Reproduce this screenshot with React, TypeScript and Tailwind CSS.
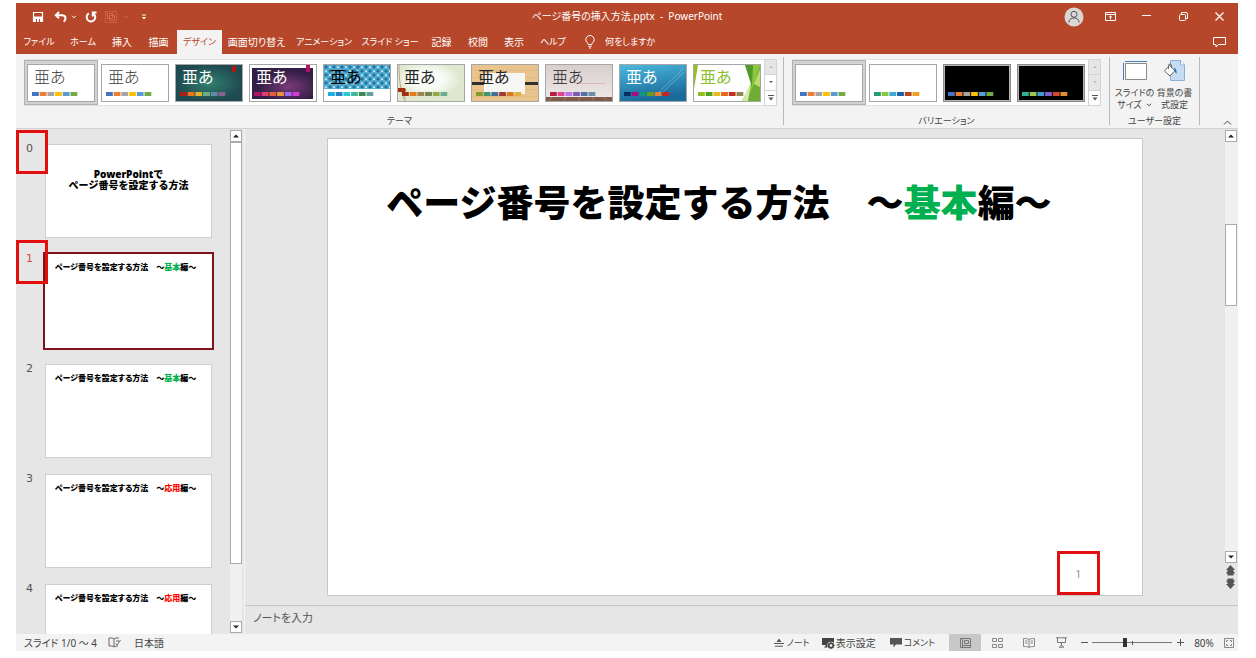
import type { ReactNode } from "react";

const OFFICE = ["#4472c4", "#ed7d31", "#a5a5a5", "#ffc000", "#5b9bd5", "#70ad47"];

type Theme = {
  name: string;
  colors: string[];
  text: string;
  art: ReactNode;
};

const THEMES: Theme[] = [
  { name: "この プレゼンテーション", colors: OFFICE, text: "font-light text-[#404040]", art: null },
  { name: "Office テーマ", colors: OFFICE, text: "font-light text-[#404040]", art: null },
  {
    name: "イオン ボードルーム",
    colors: ["#b31a1a", "#e8731a", "#e0b030", "#6fae7e", "#5f8aa8", "#8d6095"],
    text: "text-white",
    art: (
      <>
        <defs>
          <radialGradient id="teal">
            <stop offset="0" stopColor="#33806f" />
            <stop offset="1" stopColor="#1f4a50" />
          </radialGradient>
        </defs>
        <rect width="66" height="36" fill="url(#teal)" />
        <rect x="56" y="1" width="4" height="6" fill="#b01513" />
      </>
    ),
  },
  {
    name: "イオン",
    colors: ["#b31166", "#e33d6f", "#e45f3c", "#e9943a", "#9b6bf2", "#d53dd0"],
    text: "text-white",
    art: (
      <>
        <defs>
          <radialGradient id="purple" cx=".6" cy=".6">
            <stop offset="0" stopColor="#7a3a78" />
            <stop offset="1" stopColor="#331f45" />
          </radialGradient>
        </defs>
        <rect x="2" y="3" width="61" height="31" fill="url(#purple)" />
        <rect x="56" y="0" width="4" height="7" fill="#b31166" />
      </>
    ),
  },
  {
    name: "インテグラル",
    colors: ["#1cade4", "#2683c6", "#27ced7", "#42ba97", "#3e8853", "#62a39f"],
    text: "text-black",
    art: (
      <>
        <defs>
          <pattern id="plaid" width="8" height="8" patternUnits="userSpaceOnUse">
            <rect width="8" height="8" fill="#55aacf" />
            <path d="M2 0l2 2-2 2-2-2zM6 4l2 2-2 2-2-2z" fill="#1777a5" />
            <path d="M6 1l1.2 1.2L6 3.4 4.8 2.2zM2 5l1.2 1.2L2 7.4.8 6.2z" fill="#d3edf6" />
          </pattern>
        </defs>
        <rect width="66" height="24" fill="url(#plaid)" />
      </>
    ),
  },
  {
    name: "ウィスプ",
    colors: ["#a53010", "#de7e18", "#9f8351", "#728653", "#92aa4c", "#6aac91"],
    text: "text-[#262626]",
    art: (
      <>
        <defs>
          <radialGradient id="cream" cx=".45" cy=".4">
            <stop offset="0" stopColor="#ffffff" />
            <stop offset=".5" stopColor="#f8faf4" />
            <stop offset="1" stopColor="#dfe8cf" />
          </radialGradient>
        </defs>
        <rect width="66" height="36" fill="url(#cream)" />
        <path d="M1 0c0 12 1 26 6 36M4 26c2 2 3 5 3 9" fill="none" stroke="#b4a98a" />
        <path d="M0 23h7l1 2-1 2H0z" fill="#a53010" />
      </>
    ),
  },
  {
    name: "オーガニック",
    colors: ["#83992a", "#3c9770", "#44709d", "#a23c33", "#d97828", "#deb340"],
    text: "text-[#262626]",
    art: (
      <>
        <rect width="66" height="36" fill="#e9c48e" />
        <path d="M0 5.500h66M0 12.500h66M0 24.500h66M0 31.500h66" stroke="#e2b97f" />
        <path d="M0 18.500h66" stroke="#303030" strokeWidth="3" />
        <rect x="12" y="8" width="41" height="21" fill="#f6f6f4" />
      </>
    ),
  },
  {
    name: "ギャラリー",
    colors: ["#b71e42", "#de478e", "#bc72f0", "#795faf", "#586ea6", "#6892a0"],
    text: "font-light text-[#262626]",
    art: (
      <>
        <defs>
          <linearGradient id="wall" x2="0" y2="1">
            <stop offset="0" stopColor="#d6cfce" />
            <stop offset="1" stopColor="#efe9e8" />
          </linearGradient>
        </defs>
        <rect width="66" height="36" fill="url(#wall)" />
        <path d="M34 18.500h25" stroke="#dfb4bb" />
        <rect y="32" width="66" height="4" fill="#7d5a49" />
        <path d="M6 32l-3 4M20 32l-2 4M33 32v4M46 32l2 4M58 32l3 4" stroke="#a07c66" />
      </>
    ),
  },
  {
    name: "スライス",
    colors: ["#052f61", "#a50e82", "#14967c", "#6a9e1f", "#e87d37", "#c62324"],
    text: "text-white",
    art: (
      <>
        <defs>
          <linearGradient id="sky" x2=".3" y2="1">
            <stop offset="0" stopColor="#4cb9dd" />
            <stop offset="1" stopColor="#1a6a9b" />
          </linearGradient>
        </defs>
        <rect width="66" height="36" fill="url(#sky)" />
        <path d="M64 3L38 28M64 7L42 28" stroke="#7cc4df" strokeWidth=".6" />
      </>
    ),
  },
  {
    name: "ファセット",
    colors: ["#90c226", "#54a021", "#e6b91e", "#e76618", "#c42f1a", "#918655"],
    text: "text-[#8cc02c]",
    art: (
      <>
        <path d="M0 0h4L0 24z" fill="#90c226" />
        <path d="M51 0h15v36H48l9-18z" fill="#8fc63f" />
        <path d="M51 0h8l-1 22z" fill="#4f9a2b" />
        <path d="M66 0v36H52l8-17z" fill="#6fae35" />
        <path d="M66 4v18l-6-3z" fill="#b6dc6c" />
        <path d="M57 18l-9 18h6z" fill="#d4ebaa" />
      </>
    ),
  },
];

const VARIANTS = [
  { name: "バリエーション 1", dark: false, colors: OFFICE },
  { name: "バリエーション 2", dark: false, colors: ["#239b6e", "#8cc63e", "#3fa9d0", "#1c5fa5", "#b8451f", "#f0a020"] },
  { name: "バリエーション 3", dark: true, colors: OFFICE },
  { name: "バリエーション 4", dark: true, colors: ["#2fae9a", "#9fc54d", "#3f9bd0", "#7d5fd0", "#d04a28", "#e09030"] },
];

const TABS = [
  { label: "ファイル", size: "w-[46px] text-[9px]" },
  { label: "ホーム", size: "w-[42px] text-[9px]" },
  { label: "挿入", size: "w-9 text-[10px]" },
  { label: "描画", size: "w-[37px] text-[10px]" },
  { label: "デザイン", size: "w-[45px] text-[9px]" },
  { label: "画面切り替え", size: "w-[69px] text-[10px]" },
  { label: "アニメーション", size: "w-[66px] text-[9px]" },
  { label: "スライド ショー", size: "w-[66px] text-[9px]" },
  { label: "記録", size: "w-[37px] text-[10px]" },
  { label: "校閲", size: "w-9 text-[10px]" },
  { label: "表示", size: "w-9 text-[10px]" },
  { label: "ヘルプ", size: "w-[42px] text-[9px]" },
];

const SLIDES = [
  { no: 0, word: "", color: "" },
  { no: 1, word: "基本", color: "text-[#00b050]" },
  { no: 2, word: "基本", color: "text-[#00b050]" },
  { no: 3, word: "応用", color: "text-[#ff0000]" },
  { no: 4, word: "応用", color: "text-[#ff0000]" },
];

function Swatches({ colors }: { colors: string[] }) {
  return (
    <svg viewBox="0 0 46 4" className="absolute bottom-[5px] left-1 h-1 w-[46px]">
      {colors.map((c, i) => (
        <rect key={c} x={i * 7.7} width="6.8" height="4" fill={c} />
      ))}
    </svg>
  );
}

function GalleryItem({
  label,
  selected,
  dark,
  children,
}: {
  label: string;
  selected: boolean;
  dark?: boolean;
  children: ReactNode;
}) {
  return (
    <button
      type="button"
      aria-label={label}
      aria-pressed={selected}
      className={`h-[45px] w-[74px] shrink-0 ${selected ? "border border-[#b0b0b0] bg-[#d2d2d2] p-[2px]" : "p-[3px]"}`}
    >
      <span
        className={`relative block h-[38px] w-[68px] overflow-hidden border ${
          dark ? "border-[#8c8c8c] bg-black ring-1 ring-[#b5b5b5] ring-inset" : "border-[#a6a6a6] bg-white"
        }`}
      >
        {children}
      </span>
    </button>
  );
}

function GalleryScroll({ canDown }: { canDown: boolean }) {
  return (
    <div className="-my-px flex w-[13px] flex-col border border-[#d4d4d4]">
      <button type="button" aria-label="前の行" className="flex flex-1 items-center justify-center bg-[#e6e6e6]">
        <svg viewBox="0 0 6 4" className="h-1 w-1.5">
          <path d="M1 3l2-2 2 2z" fill="#b8b8b8" />
        </svg>
      </button>
      <button
        type="button"
        aria-label="次の行"
        className={`flex flex-1 items-center justify-center border-y border-[#d4d4d4] ${canDown ? "bg-white" : "bg-[#e6e6e6]"}`}
      >
        <svg viewBox="0 0 6 4" className="h-1 w-1.5">
          <path d="M1 1l2 2 2-2z" fill={canDown ? "#555" : "#b8b8b8"} />
        </svg>
      </button>
      <button type="button" aria-label="その他" className="flex flex-1 items-center justify-center bg-white">
        <svg viewBox="0 0 8 6" className="h-1.5 w-2">
          <path d="M1 .5h6" stroke="#555" />
          <path d="M1.500 2.500l2.500 3 2.500-3z" fill="#555" />
        </svg>
      </button>
    </div>
  );
}

function RibbonGroup({ caption, children }: { caption: string; children: ReactNode }) {
  return (
    <section aria-label={caption} className="flex flex-col pt-[5px]">
      {children}
      <p className="mt-2 text-center text-[9px] leading-[14px] text-[#444]">{caption}</p>
    </section>
  );
}

function Divider() {
  return <div className="my-[3px] w-px bg-[#b9b9b9]" />;
}

function ArrowButton({ label, up }: { label: string; up?: boolean }) {
  return (
    <button
      type="button"
      aria-label={label}
      className="flex size-3 shrink-0 items-center justify-center border border-[#ababab] bg-white"
    >
      <svg viewBox="0 0 6 4" className="h-1 w-1.5">
        <path d={up ? "M0 3.5L3 .5l3 3z" : "M0 .5l3 3 3-3z"} fill="#222" />
      </svg>
    </button>
  );
}

function Callout({ className }: { className: string }) {
  return <span aria-hidden="true" className={`pointer-events-none absolute z-10 h-11 border-[3px] border-[#e10f0f] ${className}`} />;
}

function DeckTitle({ word, color }: { word: string; color: string }) {
  return (
    <>
      ページ番号を設定する方法　～<span className={color}>{word}</span>編～
    </>
  );
}

function TitleBar() {
  return (
    <header className="grid h-[27px] grid-cols-[1fr_auto_1fr] items-center text-white">
      <div className="flex items-center pl-4">
        <button type="button" aria-label="上書き保存">
          <svg viewBox="0 0 12 12" className="size-3" fill="none" stroke="currentColor">
            <path d="M1.500 1.500h9v9h-9z" strokeWidth="1.2" />
            <path d="M1.500 6h9v4.500h-9z" fill="currentColor" />
            <path d="M4.500 8v3M7.500 8v3" stroke="#b7472a" />
          </svg>
        </button>
        <button type="button" aria-label="元に戻す" className="ml-2.5">
          <svg viewBox="0 0 13 12" className="h-3 w-[13px]" fill="none" stroke="currentColor" strokeWidth="2">
            <path d="M5 1L1.800 4.200 5 7.400M2 4.200h6c2.300 0 3.500 1.300 3.500 3 0 1.400-.6 2.400-1.800 3.500" />
          </svg>
        </button>
        <Caret className="ml-1" />
        <button type="button" aria-label="繰り返し" className="ml-2">
          <svg viewBox="0 0 12 12" className="size-3" fill="none" stroke="currentColor" strokeWidth="2">
            <path d="M3.800 2.400a4.300 4.300 0 104.800.300M11.500 1.500H7.800v4" />
          </svg>
        </button>
        <button type="button" aria-label="グループ化" className="ml-2 text-[#da6a4c]">
          <svg viewBox="0 0 12 12" className="size-3" fill="none" stroke="currentColor">
            <path d="M.5.5h11v11H.5z" strokeDasharray="2 1" />
            <path d="M2.500 2.500h5v5h-5zM4.500 4.500h5v5h-5z" />
          </svg>
        </button>
        <Caret className="ml-1.5 text-[#da6a4c]" />
        <button type="button" aria-label="クイック アクセス ツール バーのカスタマイズ" className="ml-3">
          <svg viewBox="0 0 6 6" className="size-1.5">
            <path d="M1 1h4" stroke="currentColor" />
            <path d="M1 3h4L3 5.500z" fill="currentColor" />
          </svg>
        </button>
      </div>
      <h2 className="text-[10px] whitespace-pre">ページ番号の挿入方法.pptx  -  PowerPoint</h2>
      <div className="flex items-center justify-end">
        <button type="button" aria-label="アカウント" className="flex w-9 justify-center">
          <svg viewBox="0 0 20 20" className="size-5">
            <circle cx="10" cy="10" r="9.5" fill="#d9d6d5" />
            <g fill="none" stroke="#555">
              <circle cx="10" cy="7.3" r="3" />
              <path d="M4.800 15.500c.4-3 2.400-4.600 5.200-4.600s4.800 1.600 5.200 4.600" />
            </g>
          </svg>
        </button>
        <button type="button" aria-label="リボンの表示オプション" className="flex w-9 justify-center">
          <svg viewBox="0 0 11 9" className="h-[9px] w-[11px]" fill="none" stroke="currentColor">
            <path d="M.5.5h10v8H.5zM.5 2.500h10M5.500 7.500V4M4 5.300L5.500 4 7 5.300" />
          </svg>
        </button>
        <button type="button" aria-label="最小化" className="flex w-[37px] justify-center">
          <svg viewBox="0 0 9 9" className="size-[9px]" stroke="currentColor">
            <path d="M0 3.500h9" />
          </svg>
        </button>
        <button type="button" aria-label="元に戻す (縮小)" className="flex w-9 justify-center">
          <svg viewBox="0 0 9 9" className="size-[9px]" fill="none" stroke="currentColor">
            <rect x=".5" y="2.500" width="6" height="6" rx="1" />
            <path d="M2.500 2V.5H7A1.500 1.500 0 018.500 2v4.500H7" />
          </svg>
        </button>
        <button type="button" aria-label="閉じる" className="flex w-[37px] justify-center">
          <svg viewBox="0 0 9 9" className="size-[9px]" stroke="currentColor" strokeWidth="1.200">
            <path d="M.5.5l8 8M8.500.5l-8 8" />
          </svg>
        </button>
      </div>
    </header>
  );
}

function Caret({ className = "" }: { className?: string }) {
  return (
    <svg viewBox="0 0 6 4" className={`h-1 w-1.5 ${className}`} fill="none" stroke="currentColor">
      <path d="M1 .8l2 2 2-2" />
    </svg>
  );
}

function TabBar() {
  return (
    <nav aria-label="リボン" className="flex h-6 text-white">
      {TABS.map((tab) => (
        <button
          key={tab.label}
          type="button"
          aria-current={tab.label === "デザイン" ? "page" : undefined}
          className={`flex shrink-0 items-center justify-center whitespace-nowrap ${tab.size} ${
            tab.label === "デザイン" ? "bg-[#f3f3f3] text-[#b7472a]" : ""
          }`}
        >
          {tab.label}
        </button>
      ))}
      <button type="button" className="ml-[11px] flex items-center gap-2.5 text-[9px] whitespace-nowrap">
        <svg viewBox="0 0 10 14" className="h-3.5 w-2.5" fill="none" stroke="currentColor">
          <path d="M3.200 9.500C3 7.800.8 7 .8 4.700a4.200 4.200 0 018.400 0C9.200 7 7 7.800 6.800 9.500zM3.300 11.300h3.400M4 13h2" />
        </svg>
        何をしますか
      </button>
      <button type="button" aria-label="コメント" className="mr-3 ml-auto">
        <svg viewBox="0 0 13 12" className="h-3 w-[13px]" fill="none" stroke="currentColor">
          <path d="M.5 1.500h12v7H5.500L3 11V8.500H.5z" />
        </svg>
      </button>
    </nav>
  );
}

function Ribbon() {
  return (
    <div className="flex h-[75px] shrink-0 border-b border-[#d2d2d2] bg-[#f3f3f3]">
      <RibbonGroup caption="テーマ">
        <div className="mr-1.5 ml-2 flex border-y border-[#e1e1e1] bg-white">
          {THEMES.map((theme, i) => (
            <GalleryItem key={theme.name} label={theme.name} selected={i === 0}>
              <svg viewBox="0 0 66 36" className="absolute inset-0 h-full w-full">
                {theme.art}
              </svg>
              <span className={`absolute top-1 left-1.5 text-[16px] leading-4 ${theme.text}`}>亜あ</span>
              <Swatches colors={theme.colors} />
            </GalleryItem>
          ))}
          <GalleryScroll canDown />
        </div>
      </RibbonGroup>
      <Divider />
      <RibbonGroup caption="バリエーション">
        <div className="mr-2 ml-2 flex border-y border-[#e1e1e1] bg-white">
          {VARIANTS.map((v, i) => (
            <GalleryItem key={v.name} label={v.name} selected={i === 0} dark={v.dark}>
              <Swatches colors={v.colors} />
            </GalleryItem>
          ))}
          <GalleryScroll canDown={false} />
        </div>
      </RibbonGroup>
      <Divider />
      <RibbonGroup caption="ユーザー設定">
        <div className="flex h-[47px] w-[89px] justify-center text-[9px] leading-3 whitespace-nowrap text-[#444]">
          <button type="button" className="flex w-10 flex-col items-center">
            <svg viewBox="0 0 25 24" className="h-6 w-[25px] shrink-0" fill="none">
              <path d="M3 2.500h22M1.500 4v17" stroke="#4a7ebb" />
              <path d="M3.500 4.500h21v16h-21z" fill="#fff" stroke="#8a8a8a" />
            </svg>
            <span className="mt-1">スライドの</span>
            <span className="flex items-center gap-1">
              サイズ
              <Caret />
            </span>
          </button>
          <button type="button" className="flex w-10 flex-col items-center">
            <svg viewBox="0 0 24 24" className="size-6 shrink-0" fill="none">
              <path d="M7.500 1.500h10l4 4.500v15.500h-14z" fill="#c5dcf2" stroke="#8ab0d8" />
              <path d="M17.500 1.500V6h4" fill="#fff" stroke="#8ab0d8" />
              <path d="M6.500 6.500l5.500 5-5 5.500-5.500-5z" fill="#fff" stroke="#666" />
              <path d="M5.500 10V6.500a1.500 1.500 0 013 0V9" stroke="#666" />
              <path d="M11 9c2 .5 2.800 2 2.500 6l-2-3z" fill="#2f6fb5" />
            </svg>
            <span className="mt-1">背景の書</span>
            <span>式設定</span>
          </button>
        </div>
      </RibbonGroup>
      <Divider />
      <button type="button" aria-label="リボンを折りたたむ" className="mt-auto mr-1.5 mb-[3px] ml-auto">
        <svg viewBox="0 0 9 5" className="h-[5px] w-[9px]" fill="none" stroke="#444">
          <path d="M1 4.500L4.500 1 8 4.500" />
        </svg>
      </button>
    </div>
  );
}

function SlideList() {
  return (
    <aside aria-label="スライド一覧" className="w-[214px] shrink-0 overflow-hidden">
      <ol className="flex flex-col gap-4 pt-[15px]">
        {SLIDES.map((slide) => (
          <li key={slide.no} className="relative flex">
            <span
              className={`w-[29px] pl-2.5 font-['DejaVu_Sans',sans-serif] text-[11px] leading-[9px] ${
                slide.no === 1 ? "text-[#d04a2e]" : "text-[#555]"
              }`}
            >
              {slide.no}
            </span>
            <button
              type="button"
              aria-label={`スライド ${slide.no}`}
              className={`flex h-[94px] w-[167px] flex-col items-center bg-white font-black whitespace-nowrap text-black ${
                slide.no === 1 ? "outline-2 outline-[#7f1518]" : "border border-[#cfcfcf]"
              }`}
            >
              {slide.no === 0 ? (
                <span className="mt-6 text-[10px] leading-[11px] [font-feature-settings:normal]">
                  PowerPointで
                  <br />
                  ページ番号を設定する方法
                </span>
              ) : (
                <span className="mt-2 pr-1.5 text-[8px] leading-[10px]">
                  <DeckTitle word={slide.word} color={slide.color} />
                </span>
              )}
            </button>
            {slide.no < 2 ? <Callout className="-top-[14px] left-0 w-8" /> : null}
          </li>
        ))}
      </ol>
    </aside>
  );
}

function Editor() {
  return (
    <main className="flex min-w-0 flex-1 flex-col border-l border-[#f5f5f5]">
      <div className="flex min-h-0 flex-1">
        <div className="flex flex-1 items-center justify-center">
          <article className="relative aspect-[816/458] w-5/6 border border-[#c8c8c8] bg-white">
            <h1 className="mt-10 pr-8 text-center text-[37px] leading-[48px] font-black whitespace-nowrap text-black [font-feature-settings:normal]">
              <DeckTitle word="基本" color="text-[#00b050]" />
            </h1>
            <span className="absolute right-[61px] bottom-[15px] text-[10px] leading-3 text-[#8b8b8b]">1</span>
            <Callout className="right-[42px] bottom-0 w-[43px]" />
          </article>
        </div>
        <div className="flex w-[13px] flex-col pt-px">
          <ArrowButton label="上へスクロール" up />
          <div className="flex w-full flex-1 flex-col bg-[#f0f0f0]">
            <div className="basis-1/5" />
            <div className="w-3 basis-1/5 border border-[#ababab] bg-white" />
          </div>
          <ArrowButton label="下へスクロール" />
          <button type="button" aria-label="前のスライド" className="mt-0.5 ml-px">
            <svg viewBox="0 0 9 11" className="h-[11px] w-[9px]" fill="#555">
              <path d="M4.500 0L9 5H7l2 3.500H7.500v2h-6v-2H0L2 5H0z" />
            </svg>
          </button>
          <button type="button" aria-label="次のスライド" className="mt-0.5 mb-4 ml-px">
            <svg viewBox="0 0 9 11" className="h-[11px] w-[9px]" fill="#555">
              <path d="M4.500 11L0 6h2L0 2.500h1.500v-2h6v2H9L7 6h2z" />
            </svg>
          </button>
        </div>
      </div>
      <div className="flex h-[29px] shrink-0 items-start border-t border-[#c6c6c6] pt-0.5 pl-2">
        <input
          type="text"
          aria-label="ノート"
          placeholder="ノートを入力"
          className="h-5 w-full bg-transparent text-[11px] leading-5 outline-none placeholder:text-[#555]"
        />
      </div>
    </main>
  );
}

function StatusBar() {
  return (
    <footer className="flex h-[17px] shrink-0 items-center bg-[#f3f3f3] text-[10px] leading-3 whitespace-nowrap text-[#444]">
      <span className="pl-2">スライド 1/0 ～ 4</span>
      <button type="button" aria-label="スペル チェック" className="ml-[11px]">
        <svg viewBox="0 0 13 11" className="h-[11px] w-[13px]" fill="none" stroke="#666">
          <path d="M6 2v8M6 2C5 1 3 .8 1 1v8c2-.2 4 0 5 1 1-.8 2.500-1 4-1M6 2c1-1 2.500-1.200 5-1M8 4h3M7.500 6.500L9 8l3.500-5" />
        </svg>
      </button>
      <button type="button" className="ml-[13px]">
        日本語
      </button>
      <div className="ml-auto flex h-full items-center">
        <button type="button" className="flex items-center gap-[3px] text-[9px]">
          <svg viewBox="0 0 10 9" className="h-[9px] w-2.5">
            <path d="M0 5.500h10M1 8.200h8" stroke="#555" />
            <path d="M2.500 4L5 .5 7.500 4z" fill="#555" />
          </svg>
          ノート
        </button>
        <button type="button" className="ml-3 flex items-center gap-px">
          <svg viewBox="0 0 13 12" className="h-3 w-[13px]">
            <path d="M0 1h12v7H6.500v2.500H2L4 8H0z" fill="#444" />
            <circle cx="9" cy="8.500" r="3.800" fill="#f3f3f3" />
            <circle cx="9" cy="8.500" r="2.300" fill="none" stroke="#444" strokeWidth="1.600" />
            <path d="M9 4.800v7.400M5.300 8.500h7.400M6.500 6l5 5M11.500 6l-5 5" stroke="#444" strokeWidth=".9" />
            <circle cx="9" cy="8.500" r="1.300" fill="#f3f3f3" />
          </svg>
          表示設定
        </button>
        <button type="button" className="ml-3.5 flex items-center gap-px text-[9px]">
          <svg viewBox="0 0 13 11" className="h-[11px] w-[13px]">
            <path d="M0 1h12v6.500H6L3.500 10.500v-3H0z" fill="#555" />
          </svg>
          コメント
        </button>
        <div className="ml-3.5 flex h-full">
          <button type="button" aria-label="標準" className="flex w-8 items-center justify-center bg-[#c8c8c8]">
            <svg viewBox="0 0 11 10" className="h-2.5 w-[11px]" fill="none" stroke="#777">
              <path d="M.5.5h10v9H.5zM2.500.5v9M4.500 2.500h4v3h-4zM2.500 7.500h8" />
            </svg>
          </button>
          <button type="button" aria-label="スライド一覧" className="flex w-8 items-center justify-center">
            <svg viewBox="0 0 11 10" className="h-2.5 w-[11px]" fill="none" stroke="#888">
              <path d="M.5.5h4v3h-4zM6.500.5h4v3h-4zM.5 6.500h4v3h-4zM6.500 6.500h4v3h-4z" />
            </svg>
          </button>
          <button type="button" aria-label="閲覧表示" className="flex w-8 items-center justify-center">
            <svg viewBox="0 0 12 10" className="h-2.5 w-3" fill="none" stroke="#888">
              <path d="M6 1.500v8M6 1.500C5 .7 3 .5.500.5v8c2.500 0 4.500.2 5.500 1 1-.8 3-1 5.500-1v-8C9 .5 7 .7 6 1.500zM2 3h2.500M2 5h2.500M7.500 3H10M7.500 5H10" />
            </svg>
          </button>
          <button type="button" aria-label="スライド ショー" className="flex w-8 items-center justify-center">
            <svg viewBox="0 0 11 11" className="size-[11px]" fill="none" stroke="#777">
              <path d="M0 .8h11M1.500 1v4.500h8V1M5.500 5.500v3M3 10.200h5M3.500 10l2-2 2 2" />
            </svg>
          </button>
        </div>
        <button type="button" aria-label="縮小" className="ml-[3px] flex w-2 justify-center">
          <svg viewBox="0 0 7 7" className="size-[7px]" stroke="#555">
            <path d="M0 3.500h7" />
          </svg>
        </button>
        <div className="relative mx-1 flex h-full w-20 items-center">
          <span className="absolute left-10 h-1 w-px bg-[#555]" />
          <input
            type="range"
            aria-label="ズーム"
            min={0}
            max={100}
            defaultValue={41}
            className="h-2.5 w-full appearance-none bg-transparent [&::-webkit-slider-runnable-track]:h-px [&::-webkit-slider-runnable-track]:bg-[#777] [&::-webkit-slider-thumb]:-mt-1 [&::-webkit-slider-thumb]:h-[9px] [&::-webkit-slider-thumb]:w-1 [&::-webkit-slider-thumb]:appearance-none [&::-webkit-slider-thumb]:bg-[#333]"
          />
        </div>
        <button type="button" aria-label="拡大" className="flex w-2 justify-center">
          <svg viewBox="0 0 7 7" className="size-[7px]" stroke="#555">
            <path d="M0 3.500h7M3.500 0v7" />
          </svg>
        </button>
        <button type="button" className="ml-2 w-6 text-center">
          80%
        </button>
        <button type="button" aria-label="ウィンドウに合わせる" className="mr-1 ml-2">
          <svg viewBox="0 0 10 10" className="size-2.5" fill="none" stroke="#888">
            <path d="M.5.5h9v9h-9z" />
            <path d="M2.500 4V2.500H4M6 2.500h1.500V4M2.500 6v1.500H4M6 7.500h1.500V6" />
          </svg>
        </button>
      </div>
    </footer>
  );
}

export default function App() {
  return (
    <div
      lang="ja"
      className="flex h-screen flex-col overflow-hidden bg-white pt-[3px] pr-[18px] pb-[7px] pl-4 font-['Noto_Sans','Noto_Sans_CJK_JP',sans-serif] [font-feature-settings:'palt']"
    >
      <div className="shrink-0 bg-[#b7472a]">
        <TitleBar />
        <TabBar />
      </div>
      <Ribbon />
      <div className="flex min-h-0 flex-1 bg-[#e6e6e6]">
        <SlideList />
        <div className="mr-0.5 flex w-3 flex-col py-px">
          <ArrowButton label="上へスクロール" up />
          <div className="flex flex-1 flex-col bg-[#f0f0f0]">
            <div className="basis-[88%] border border-[#ababab] bg-white" />
          </div>
          <ArrowButton label="下へスクロール" />
        </div>
        <Editor />
      </div>
      <StatusBar />
    </div>
  );
}
